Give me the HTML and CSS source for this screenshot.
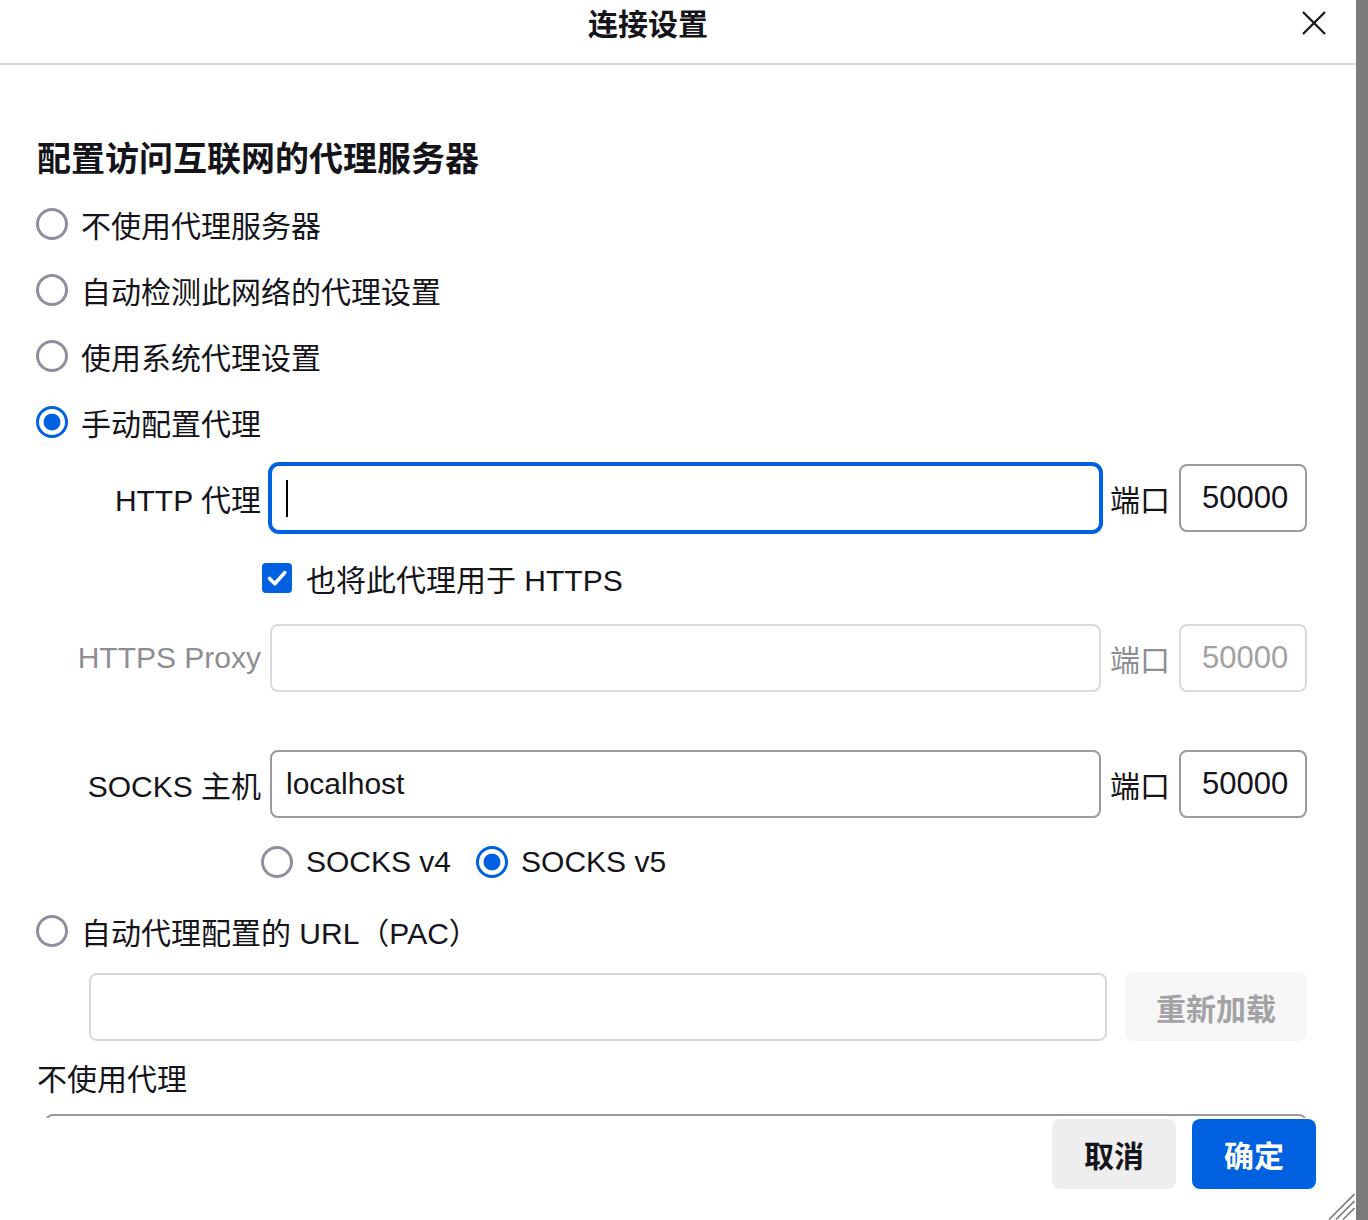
FILE: index.html
```html
<!DOCTYPE html>
<html lang="zh-CN">
<head>
<meta charset="utf-8">
<title>连接设置</title>
<link rel="stylesheet" href="styles.css">
</head>
<body>
<div class="dialog">
  <header class="header">
    <div class="title">连接设置</div>
    <div class="close">
      <svg width="24" height="24" viewBox="0 0 24 24"><path d="M1 1 L23 23 M23 1 L1 23" stroke="#15141a" stroke-width="2.2" fill="none"/></svg>
    </div>
  </header>
  <main class="content">
    <h2 class="heading">配置访问互联网的代理服务器</h2>
    <div class="radio-row"><span class="radio"></span><span>不使用代理服务器</span></div>
    <div class="radio-row"><span class="radio"></span><span>自动检测此网络的代理设置</span></div>
    <div class="radio-row"><span class="radio"></span><span>使用系统代理设置</span></div>
    <div class="radio-row"><span class="radio checked"></span><span>手动配置代理</span></div>

    <div class="proxy-row row-http">
      <span class="plabel">HTTP 代理</span>
      <div class="field host focused"><span class="caret"></span></div>
      <span class="port-label">端口</span>
      <div class="field port">50000</div>
    </div>

    <div class="check-row">
      <span class="checkbox"><svg width="30" height="30" viewBox="0 0 30 30"><path d="M7.5 15.5 L12.8 20.8 L22.8 9.6" stroke="#fff" stroke-width="3.6" stroke-linecap="round" stroke-linejoin="round" fill="none"/></svg></span>
      <span>也将此代理用于 HTTPS</span>
    </div>

    <div class="proxy-row row-https disabled">
      <span class="plabel">HTTPS Proxy</span>
      <div class="field host"></div>
      <span class="port-label">端口</span>
      <div class="field port">50000</div>
    </div>

    <div class="proxy-row row-socks">
      <span class="plabel">SOCKS 主机</span>
      <div class="field host">localhost</div>
      <span class="port-label">端口</span>
      <div class="field port">50000</div>
    </div>

    <div class="socks-ver">
      <div class="ver"><span class="radio"></span><span>SOCKS v4</span></div>
      <div class="ver"><span class="radio checked"></span><span>SOCKS v5</span></div>
    </div>

    <div class="radio-row pac-radio"><span class="radio"></span><span>自动代理配置的 URL（PAC）</span></div>

    <div class="pac-row">
      <div class="field pac"></div>
      <button class="reload" type="button">重新加载</button>
    </div>

    <div class="noproxy-label">不使用代理</div>
    <div class="textarea"></div>
  </main>
  <footer class="footer">
    <button class="btn cancel" type="button">取消</button>
    <button class="btn ok" type="button">确定</button>
  </footer>
  <svg class="grip" width="28" height="28" viewBox="0 0 28 28"><path d="M2 27.5 L27.5 2 M9 27.5 L27.5 9 M16 27.5 L27.5 16" stroke="#7a7a7a" stroke-width="1.6" fill="none"/></svg>
</div>
</body>
</html>
```

FILE: styles.css
```css
* {
  box-sizing: border-box;
}

html,
body {
  margin: 0;
  padding: 0;
}

body {
  width: 1368px;
  height: 1220px;
  overflow: hidden;
  background: #7b7b7b;
  font-family: "Liberation Sans", "Noto Sans CJK SC", sans-serif;
  color: #15141a;
}

.dialog {
  position: relative;
  width: 1356px;
  height: 1220px;
  background: #fff;
  display: flex;
  flex-direction: column;
}

.header {
  flex: none;
  height: 65px;
  border-bottom: 2px solid #d8d8d8;
  display: flex;
  align-items: flex-start;
}

.title {
  flex: 1;
  text-align: center;
  font-size: 30px;
  font-weight: 700;
  line-height: 50px;
}

.close {
  width: 36px;
  height: 46px;
  margin-right: 24px;
  display: flex;
  align-items: center;
  justify-content: center;
}

.content {
  flex: none;
  height: 1053px;
  overflow: hidden;
  padding: 62px 0 0 37px;
  display: flex;
  flex-direction: column;
  align-items: flex-start;
}

.content > * {
  flex: none;
}

.heading {
  margin: 0;
  height: 64px;
  font-size: 34px;
  font-weight: 700;
  line-height: 64px;
  white-space: nowrap;
}

.radio-row {
  height: 66px;
  display: flex;
  align-items: center;
  gap: 13px;
  font-size: 30px;
  white-space: nowrap;
  margin-left: -1px;
}

.radio {
  flex: none;
  width: 32px;
  height: 32px;
  border-radius: 50%;
  border: 3px solid #8f8f9d;
  background: #fff;
}

.radio.checked {
  border-color: #0061e0;
  background: radial-gradient(circle, #0061e0 0 8px, #fff 8.8px);
}

.proxy-row {
  height: 68px;
  display: flex;
  align-items: center;
  font-size: 30px;
  white-space: nowrap;
}

.row-http {
  margin-top: 9px;
}

.row-https {
  margin-top: 16px;
}

.row-socks {
  margin-top: 58px;
}

.plabel {
  width: 224px;
  margin-right: 9px;
  text-align: right;
}

.field {
  flex: none;
  height: 68px;
  border: 2px solid #9a9a9a;
  border-radius: 8px;
  background: #fff;
  display: flex;
  align-items: center;
  padding-left: 14px;
  font-size: 30px;
}

.field.host {
  width: 831px;
}

.field.focused {
  border-color: #0061e0;
  box-shadow: 0 0 0 2px #0061e0;
  border-radius: 9px;
}

.caret {
  width: 2px;
  height: 37px;
  background: #000;
}

.port-label {
  margin-left: 9px;
  width: 58px;
}

.field.port {
  margin-left: 11px;
  width: 128px;
  padding-left: 21px;
  font-size: 31px;
}

.disabled .plabel,
.disabled .port-label {
  color: #8e8e92;
}

.disabled .field {
  border-color: #dadadc;
  color: #a2a2a4;
}

.check-row {
  margin-top: 16px;
  margin-left: 225px;
  height: 60px;
  display: flex;
  align-items: center;
  gap: 14px;
  font-size: 30px;
  white-space: nowrap;
}

.checkbox {
  flex: none;
  width: 30px;
  height: 30px;
  border-radius: 4px;
  background: #0061e0;
  display: flex;
}

.socks-ver {
  margin-top: 14px;
  margin-left: 224px;
  height: 60px;
  display: flex;
  align-items: center;
  gap: 25px;
  font-size: 30px;
  white-space: nowrap;
}

.ver {
  display: flex;
  align-items: center;
  gap: 13px;
}

.pac-radio {
  margin-top: 6px;
}

.pac-row {
  margin-top: 8px;
  margin-left: 52px;
  display: flex;
  align-items: center;
  gap: 18px;
}

.field.pac {
  width: 1018px;
  border-color: #d8d8da;
}

.reload {
  width: 182px;
  height: 69px;
  border: none;
  border-radius: 8px;
  background: #f6f6f6;
  color: #a3a3a5;
  font-family: inherit;
  font-size: 30px;
  font-weight: 700;
  padding: 0;
}

.noproxy-label {
  margin-top: 19px;
  height: 40px;
  line-height: 40px;
  font-size: 30px;
  white-space: nowrap;
}

.textarea {
  margin-top: 14px;
  margin-left: 8px;
  width: 1262px;
  height: 200px;
  border: 2px solid #9a9a9a;
  border-radius: 8px;
}

.footer {
  flex: 1;
  display: flex;
  justify-content: flex-end;
  align-items: flex-start;
  gap: 16px;
  padding: 1px 40px 0 0;
}

.btn {
  width: 124px;
  height: 70px;
  border: none;
  border-radius: 8px;
  font-family: inherit;
  font-size: 30px;
  font-weight: 700;
  padding: 0;
}

.btn.cancel {
  background: #eeeeee;
  color: #15141a;
}

.btn.ok {
  background: #0061e0;
  color: #fff;
}

.grip {
  position: absolute;
  right: 1px;
  bottom: 0;
}
```
